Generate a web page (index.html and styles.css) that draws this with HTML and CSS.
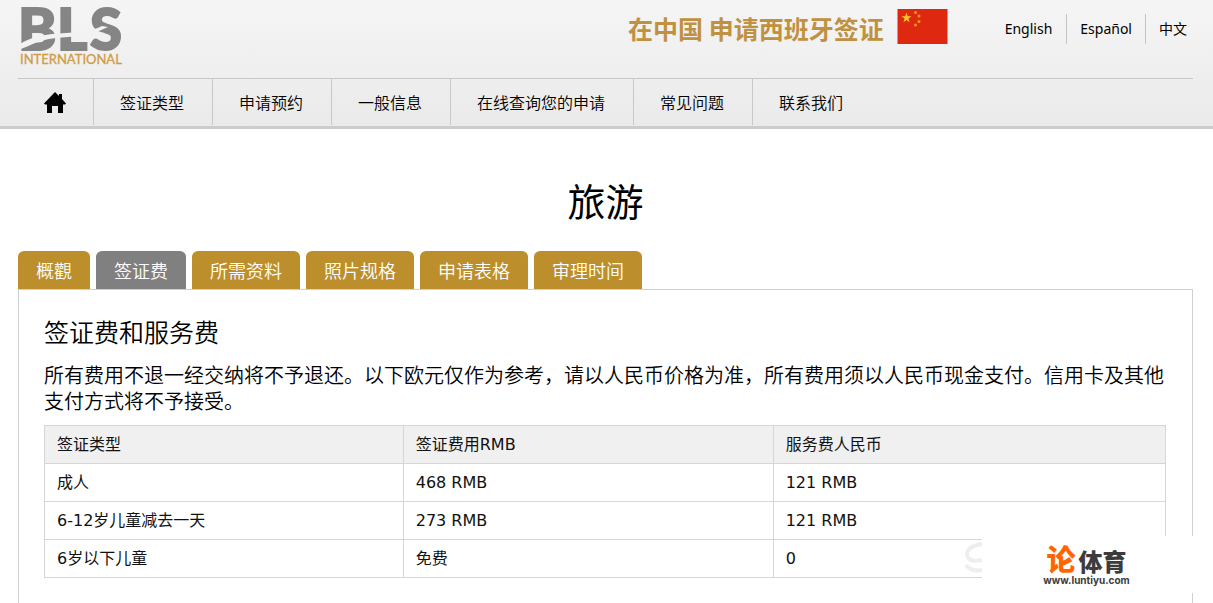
FILE: index.html
```html
<!DOCTYPE html>
<html lang="zh-CN">
<head>
<meta charset="utf-8">
<title>旅游 - BLS International</title>
<link rel="stylesheet" href="styles.css">
</head>
<body>
<header class="site-header">
  <div class="top-bar">
    <a class="logo" href="#">
      <svg class="logo-art" viewBox="0 0 106 70" role="img" aria-label="BLS International">
        <g class="logo-name"><text x="0" y="50">B</text><text x="39" y="50">L</text><text x="72" y="50">S</text></g>
        <path class="logo-cut" d="M0 45 Q14 36 34 34 L62 32 Q76 30 84 26 L90 27 Q76 34 62 36 L38 38 Q24 39 8 47 L0 50Z"/>
        <text class="logo-sub" x="2" y="64">INTERNATIONAL</text>
      </svg>
    </a>
    <div class="country">
      <span class="country-name">在中国 申请西班牙签证</span>
      <svg class="flag" viewBox="0 0 50 35" aria-hidden="true">
        <rect width="50" height="35" fill="#de2910"/>
        <path fill="#ffc72c" d="M9 3.500 10.200 7.200H14L10.900 9.500 12.100 13.200 9 10.900 5.900 13.200 7.100 9.500 4 7.200H7.800Z"/>
        <g fill="#f39a1e"><circle cx="18" cy="3.500" r="1.500"/><circle cx="21.500" cy="7" r="1.500"/><circle cx="21.500" cy="12.500" r="1.500"/><circle cx="18" cy="16" r="1.500"/></g>
      </svg>
    </div>
    <nav class="languages" aria-label="Language">
      <a href="#">English</a><a href="#">Español</a><a href="#">中文</a>
    </nav>
  </div>
  <nav class="main-nav" aria-label="主导航">
    <a class="home" href="#" aria-label="首页"><svg viewBox="0 0 22 21" aria-hidden="true"><path d="M11 0 15 4V2h3v5l4 4.500-1 1h-2V21h-5v-7H8v7H3v-8.500H1l-1-1Z"/></svg></a>
    <a href="#">签证类型</a><a href="#">申请预约</a><a href="#">一般信息</a><a href="#">在线查询您的申请</a><a href="#">常见问题</a><a href="#">联系我们</a>
  </nav>
</header>
<main class="content">
  <h1>旅游</h1>
  <nav class="tabs" aria-label="签证信息">
    <a href="#">概觀</a><a class="active" href="#" aria-current="page">签证费</a><a href="#">所需资料</a><a href="#">照片规格</a><a href="#">申请表格</a><a href="#">审理时间</a>
  </nav>
  <section class="panel">
    <h2>签证费和服务费</h2>
    <p>所有费用不退一经交纳将不予退还。以下欧元仅作为参考，请以人民币价格为准，所有费用须以人民币现金支付。信用卡及其他支付方式将不予接受。</p>
    <table class="fees">
      <thead><tr><th>签证类型</th><th>签证费用RMB</th><th>服务费人民币</th></tr></thead>
      <tbody>
        <tr><td>成人</td><td>468 RMB</td><td>121 RMB</td></tr>
        <tr><td>6-12岁儿童减去一天</td><td>273 RMB</td><td>121 RMB</td></tr>
        <tr><td>6岁以下儿童</td><td>免费</td><td>0</td></tr>
      </tbody>
    </table>
  </section>
</main>
<aside class="watermark">
  <svg class="swirl" viewBox="0 0 18 40" aria-hidden="true"><path d="M18 8Q3 10 3 19Q5 27 18 24M2 29Q7 36 18 34"/></svg>
  <div class="mark">
    <div class="mark-name"><span class="mark-accent">论</span>体育</div>
    <div class="mark-url">www.luntiyu.com</div>
  </div>
</aside>
</body>
</html>
```
FILE: styles.css
```css
* { box-sizing: border-box; }
body {
  margin: 0;
  min-height: 100vh;
  display: flex;
  flex-direction: column;
  background: #fff;
  color: #000;
  font: 350 16px/24px "Noto Sans CJK SC", sans-serif;
}
a { color: inherit; text-decoration: none; }
.site-header {
  padding: 0 20px 0 18px;
  background: linear-gradient(#f5f5f5, #eaeaea);
  border-bottom: 3px solid #ccc;
}
.top-bar {
  display: flex;
  align-items: flex-start;
  height: 78px;
}
.logo { margin-right: auto; }
.logo-art { display: block; width: 106px; height: 70px; overflow: visible; }
.logo-name { font: 900 58px "Lato", sans-serif; fill: #858585; stroke: #858585; stroke-width: 2; }
.logo-cut { fill: #f2f2f2; }
.logo-sub { font: 400 13px "Lato", sans-serif; fill: #cf9c45; stroke: #cf9c45; stroke-width: 0.3; }
.country { display: flex; gap: 13px; padding-top: 9px; }
.country-name {
  color: #bf9140;
  font: 700 25px/38px "Noto Sans CJK SC", sans-serif;
}
.flag { width: 51px; height: 35px; }
.languages {
  display: flex;
  margin-left: 44px;
  padding-top: 14px;
  font: 400 14px/30px "Noto Sans", "Noto Sans CJK SC", sans-serif;
}
.languages a { padding: 0 13px; }
.languages a + a { border-left: 1px solid #c4c4c4; }
.languages a:first-child { padding-right: 14px; }
.languages a:last-child { padding-right: 6px; }
.main-nav {
  display: flex;
  border-top: 1px solid #c8c8c8;
  line-height: 46px;
  padding-bottom: 1px;
}
.main-nav a { padding: 0 28px 0 26px; border-left: 1px solid #c8c8c8; }
.main-nav .home { display: flex; align-items: center; width: 75px; border-left: 0; }
.home svg { flex: none; width: 22px; height: 21px; }
.content {
  flex: 1;
  display: flex;
  flex-direction: column;
  padding: 41px 20px 0 18px;
}
h1 { margin: 0 0 21px; font-weight: 400; font-size: 38px; line-height: 60px; text-align: center; }
.tabs { display: flex; gap: 6px; font-size: 18px; line-height: 36px; }
.tabs a {
  padding: 1px 18px;
  border-radius: 6px 6px 0 0;
  background: #bd8f2c;
  color: #fff;
}
.tabs .active { background: #808080; }
.panel { flex: 1; padding: 22px 26px 25px 25px; border: 1px solid #ccd2d2; border-bottom: 0; }
h2 { margin: 0 0 12px; font-weight: 350; font-size: 25px; line-height: 38px; }
p { margin: 0 0 11px; font-size: 20px; line-height: 26px; }
.fees {
  width: 100%;
  border-collapse: collapse;
  table-layout: fixed;
  color: #111;
  font-family: "DejaVu Sans", "Noto Sans CJK SC", sans-serif;
}
.fees th, .fees td {
  height: 38px;
  padding: 1px 12px 0;
  border: 1px solid #d6d6d6;
  text-align: left;
  font-weight: 400;
}
.fees th { background: #f0f0f0; }
.fees th:nth-child(1) { width: 32%; }
.fees th:nth-child(2) { width: 33%; }
.watermark { position: fixed; right: 0; bottom: 10px; display: flex; }
.swirl { width: 18px; height: 40px; fill: none; stroke: #eee; stroke-width: 4; }
.mark {
  width: 231px;
  height: 57px;
  padding: 8px 22px 0 0;
  background: #fff;
  color: #3c3c3c;
  font-family: "Noto Sans CJK SC", sans-serif;
  font-weight: 900;
  text-align: center;
}
.mark-name { font-size: 24px; line-height: 29px; }
.mark-accent { color: #f60; font-size: 29px; margin-right: 3px; }
.mark-url { font: 700 10px/10px "Inter", sans-serif; }
```
